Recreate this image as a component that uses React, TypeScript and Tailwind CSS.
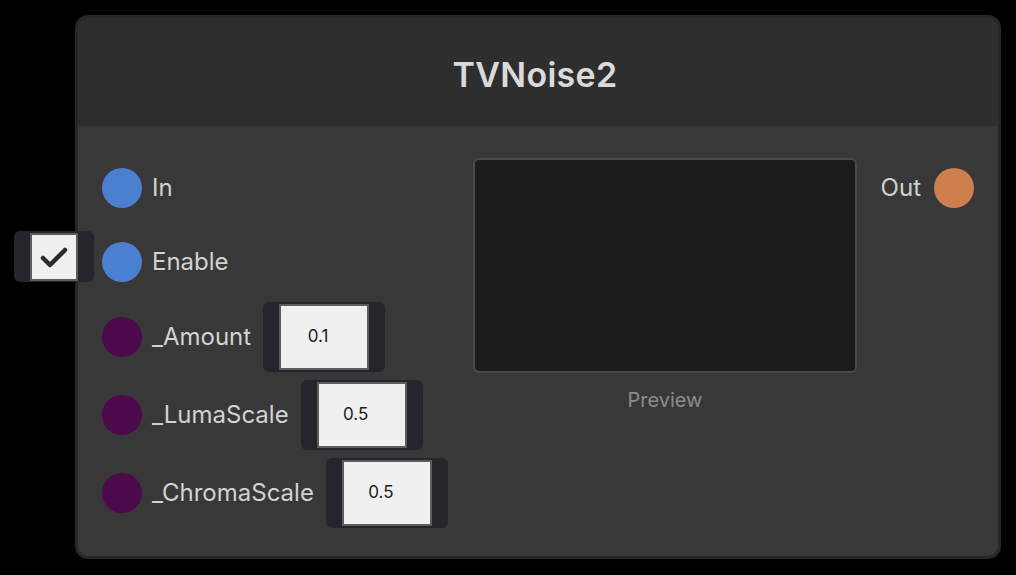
import React from "react";

interface Port {
  name: string;
  color: string;
  field?: string;
  toggle?: boolean;
}

const inputs: Port[] = [
  { name: "In", color: "bg-[#4b80d0]" },
  { name: "Enable", color: "bg-[#4b80d0]", toggle: true },
  { name: "_Amount", color: "bg-[#4c0a4c]", field: "0.1" },
  { name: "_LumaScale", color: "bg-[#4c0a4c]", field: "0.5" },
  { name: "_ChromaScale", color: "bg-[#4c0a4c]", field: "0.5" },
];

function ValueField({ value }: { value: string }) {
  return (
    <div className="ml-3 flex h-[70px] w-[122px] items-center justify-center rounded-md bg-[#25252c]">
      <div className="flex h-[66px] w-[90px] items-center justify-center border-2 border-[#5c5c5c] bg-[#f0f0f0] pr-3 text-[17px] text-[#1c1c1c]">
        {value}
      </div>
    </div>
  );
}

function Toggle() {
  return (
    <div className="absolute left-[-88px] top-[6px] flex h-[51px] w-[80px] items-center justify-center rounded-md bg-[#25252c]">
      <div className="flex h-[48px] w-[48px] items-center justify-center border-2 border-[#5c5c5c] bg-[#f0f0f0]">
        <svg width="30" height="24" viewBox="0 0 30 24" fill="none">
          <path
            d="M4 13 L11 20 L26 5"
            stroke="#2b2b2b"
            strokeWidth="4.5"
            strokeLinecap="round"
            strokeLinejoin="round"
          />
        </svg>
      </div>
    </div>
  );
}

function InputRow({ port, index }: { port: Port; index: number }) {
  const tall = index < 2 ? "h-[74px]" : "h-[70px]";
  const spacing = index === 2 ? "mt-[3px]" : index > 2 ? "mt-2" : "";
  return (
    <div className={`relative flex items-center ${tall} ${spacing}`}>
      {port.toggle && <Toggle />}
      <div className={`h-10 w-10 shrink-0 rounded-full ${port.color}`} />
      <span className="ml-[10px] text-[24px] text-[#d2d2d2]">{port.name}</span>
      {port.field && <ValueField value={port.field} />}
    </div>
  );
}

export default function App() {
  return (
    <div
      className="h-[575px] w-[1016px] bg-black pl-[75px] pt-[15px]"
      style={{ fontFamily: "Inter, 'Noto Sans', sans-serif" }}
    >
      <div className="w-[926px] rounded-[13px] border-[3px] border-[#272727] bg-[#383838]">
        {/* Header */}
        <div className="flex h-[108px] items-center justify-center rounded-t-[10px] bg-[#2e2e2e] pr-[6px] pt-1">
          <h1 className="text-[34px] font-semibold tracking-[0.3px] text-[#dadada]">TVNoise2</h1>
        </div>

        {/* Body */}
        <div className="flex rounded-b-[10px] pb-[28px] pl-6 pr-6 pt-[25px]">
          <div className="flex w-[371px] flex-col">
            {inputs.map((port, index) => (
              <InputRow key={port.name} port={port} index={index} />
            ))}
          </div>

          <div className="flex w-[384px] flex-col items-center pt-[7px]">
            <div className="h-[215px] w-[384px] rounded-md border-2 border-[#4a4a4a] bg-[#1b1b1b]" />
            <span className="mt-[12px] text-[20px] text-[#8c8c8c]">Preview</span>
          </div>

          <div className="ml-auto flex h-[74px] items-center">
            <span className="mr-[13px] text-[24px] text-[#d2d2d2]">Out</span>
            <div className="h-10 w-10 rounded-full bg-[#cd7f4d]" />
          </div>
        </div>
      </div>
    </div>
  );
}
